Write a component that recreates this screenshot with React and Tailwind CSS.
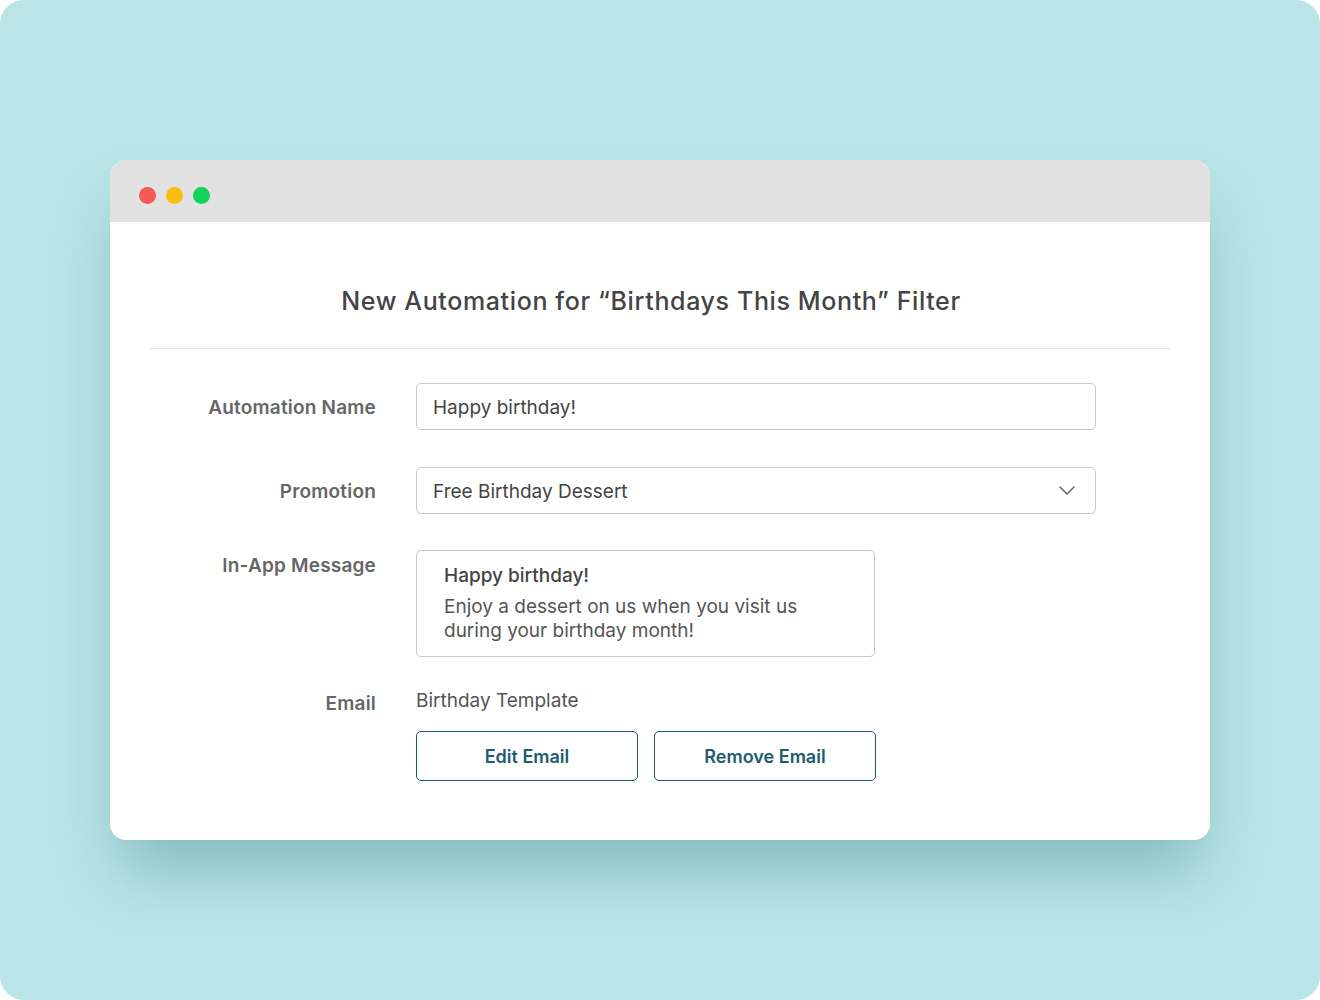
import React from "react";

const font = { fontFamily: "Inter, 'Noto Sans', sans-serif" };

const Row = ({ label, align = "center", children, labelClass = "" }) => (
  <div className={`flex ${align === "center" ? "items-center" : "items-start"}`}>
    <div
      className={`w-[227px] shrink-0 text-right text-[19px] font-semibold text-[#666] tracking-[0.01em] ${labelClass}`}
    >
      {label}
    </div>
    <div className="ml-10 flex-1">{children}</div>
  </div>
);

const App = () => {
  return (
    <div className="w-[1320px] h-[1000px] bg-white" style={font}>
      <div className="w-full h-full rounded-[24px] bg-[#b9e5e8] pt-[160px] px-[110px]">
        <div className="h-[680px] rounded-[16px] bg-white overflow-hidden shadow-[0_40px_60px_-10px_rgba(40,110,120,0.35)]">
          {/* title bar */}
          <div className="h-[62px] bg-[#e2e2e2] flex items-center gap-[10px] pt-[8px] pl-[29px]">
            <span className="w-[17px] h-[17px] rounded-full bg-[#f25a54]" />
            <span className="w-[17px] h-[17px] rounded-full bg-[#fdbd10]" />
            <span className="w-[17px] h-[17px] rounded-full bg-[#10d45a]" />
          </div>

          <div className="px-[39px]">
            <h1 className="pt-[64px] pb-[32px] pr-[18px] text-center text-[25px] leading-[30px] font-medium tracking-[0.025em] text-[#444] border-b border-[#e3e3e3]">
              New Automation for “Birthdays This Month” Filter
            </h1>

            <div className="pt-[34px] flex flex-col">
              <Row label="Automation Name" labelClass="pt-[3px]">
                <div className="w-[680px] h-[47px] rounded-[5px] border border-[#c9c9c9] flex items-center pl-4 pt-[3px] text-[19px] text-[#444]">
                  Happy birthday!
                </div>
              </Row>

              <div className="mt-[37px]">
                <Row label="Promotion" labelClass="pt-[3px]">
                  <div className="w-[680px] h-[47px] rounded-[5px] border border-[#c9c9c9] flex items-center justify-between pl-4 pr-[20px] text-[19px] text-[#444]">
                    <span className="pt-[3px]">Free Birthday Dessert</span>
                    <svg width="16" height="9" viewBox="0 0 16 9" fill="none">
                      <path d="M1 1l7 7 7-7" stroke="#666" strokeWidth="1.5" strokeLinecap="round" strokeLinejoin="round" />
                    </svg>
                  </div>
                </Row>
              </div>

              <div className="mt-[36px]">
                <Row label="In-App Message" align="start" labelClass="pt-[2px]">
                  <div className="w-[459px] h-[107px] rounded-[5px] border border-[#c9c9c9] pl-[27px] pt-[12px] text-[#555]">
                    <div className="text-[19px] leading-[26px] font-medium text-[#444]">Happy birthday!</div>
                    <div className="mt-[6px] text-[19px] leading-[24px]">
                      Enjoy a dessert on us when you visit us
                      <br />
                      during your birthday month!
                    </div>
                  </div>
                </Row>
              </div>

              <div className="mt-[31px]">
                <Row label="Email" align="start" labelClass="leading-[26px] pt-[3px]">
                  <div className="text-[19px] leading-[26px] text-[#555]">Birthday Template</div>
                  <div className="mt-[17px] flex gap-4">
                    <button className="w-[222px] h-[50px] rounded-[5px] border-[1.5px] border-[#1e5a6b] text-[18px] font-semibold text-[#1d5c6e]">
                      Edit Email
                    </button>
                    <button className="w-[222px] h-[50px] rounded-[5px] border-[1.5px] border-[#1e5a6b] text-[18px] font-semibold text-[#1d5c6e]">
                      Remove Email
                    </button>
                  </div>
                </Row>
              </div>
            </div>
          </div>
        </div>
      </div>
    </div>
  );
};

export default App;
